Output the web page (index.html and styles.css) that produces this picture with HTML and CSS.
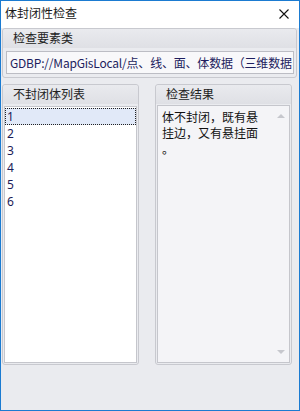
FILE: index.html
```html
<!DOCTYPE html>
<html lang="zh-CN">
<head>
    <meta charset="UTF-8">
    <title>体封闭性检查</title>
    <link rel="stylesheet" href="styles.css">
</head>
<body>

    <div class="window">
        <div class="titlebar">
            <span class="title">体封闭性检查</span>
            <svg class="close" width="10" height="10" viewBox="0 0 10 10">
                <path d="M0.5 0.5 L9.5 9.5 M9.5 0.5 L0.5 9.5" stroke="#111" stroke-width="1.1" fill="none"/>
            </svg>
        </div>

        <div class="content">
            <div class="group group-top">
                <div class="group-header">检查要素类</div>
                <div class="group-body">
                    <div class="textbox">GDBP://MapGisLocal/点、线、面、体数据（三维数据</div>
                </div>
            </div>

            <div class="row">
                <div class="group group-side">
                    <div class="group-header">不封闭体列表</div>
                    <div class="listbox">
                        <div class="list-item selected">1</div>
                        <div class="list-item">2</div>
                        <div class="list-item">3</div>
                        <div class="list-item">4</div>
                        <div class="list-item">5</div>
                        <div class="list-item">6</div>
                    </div>
                </div>

                <div class="group group-side">
                    <div class="group-header">检查结果</div>
                    <div class="result">
                        <div class="result-text">体不封闭，既有悬<br>挂边，又有悬挂面<br>。</div>
                        <div class="scrollbar">
                            <span class="arrow-up"></span>
                            <span class="arrow-down"></span>
                        </div>
                    </div>
                </div>
            </div>
        </div>
    </div>

</body>
</html>
```

FILE: styles.css
```css
body {
    margin: 0;
    padding: 0;
    font-family: "Noto Sans CJK SC", "Noto Sans", sans-serif;
    font-size: 12px;
    background: #eaebef;
}

.window {
    width: 300px;
    height: 411px;
    box-sizing: border-box;
    border: 1px solid #1b7bd1;
    display: flex;
    flex-direction: column;
    background: #eaebef;
}

.titlebar {
    height: 27px;
    background: white;
    display: flex;
    align-items: center;
    justify-content: space-between;
    padding: 0 10px 0 4px;
    flex-shrink: 0;
}
.title {
    color: #1a1a1a;
    font-size: 12px;
    line-height: 14px;
    margin-top: -3px;
}
.close {
    display: block;
    margin-top: -1px;
}

.content {
    flex: 1;
    padding: 0 2px 0 1px;
    display: flex;
    flex-direction: column;
    gap: 6px;
}

.group {
    border: 1px solid #c8c9cf;
    border-radius: 3px;
    box-sizing: border-box;
    display: flex;
    flex-direction: column;
}
.group-header {
    height: 19px;
    line-height: 18px;
    padding-left: 10px;
    color: #222;
    background: linear-gradient(#e9eaee, #dfe0e5);
    border-radius: 3px 3px 0 0;
}

.group-top {
    height: 50px;
}
.group-body {
    flex: 1;
    padding: 3px 2px 2px 3px;
}
.textbox {
    height: 21px;
    line-height: 21px;
    border: 1px solid #bcbdc4;
    background: #f8f8fa;
    padding-left: 3px;
    color: #1d1d5e;
    white-space: nowrap;
    overflow: hidden;
    letter-spacing: -0.2px;
}

.row {
    display: flex;
    gap: 16px;
    padding-right: 4px;
}
.group-side {
    width: 137px;
    height: 281px;
}

.listbox {
    flex: 1;
    margin: 2px 1px 1px 1px;
    background: white;
    border: 1px solid #c5c6cc;
    padding-top: 1px;
}
.list-item {
    height: 17px;
    line-height: 17px;
    padding-left: 2px;
    color: #1c1c58;
    font-family: "Noto Sans", sans-serif;
    font-size: 12px;
    box-sizing: border-box;
}
.list-item.selected {
    background: #e1e9f8;
    border: 1px dotted #222;
    padding-left: 1px;
    line-height: 15px;
}

.result {
    flex: 1;
    margin: 1px 1px 1px 1px;
    background: #f4f4f7;
    border: 1px solid #c5c6cc;
    display: flex;
}
.result-text {
    flex: 1;
    padding: 3px 0 0 4px;
    line-height: 16px;
    color: #111;
}
.scrollbar {
    width: 17px;
    display: flex;
    flex-direction: column;
    justify-content: space-between;
    align-items: center;
    padding: 8px 0 8px 0;
}
.arrow-up {
    width: 0;
    height: 0;
    border-left: 4px solid transparent;
    border-right: 4px solid transparent;
    border-bottom: 4px solid #c6c7cd;
}
.arrow-down {
    width: 0;
    height: 0;
    border-left: 4px solid transparent;
    border-right: 4px solid transparent;
    border-top: 4px solid #c6c7cd;
}
```
